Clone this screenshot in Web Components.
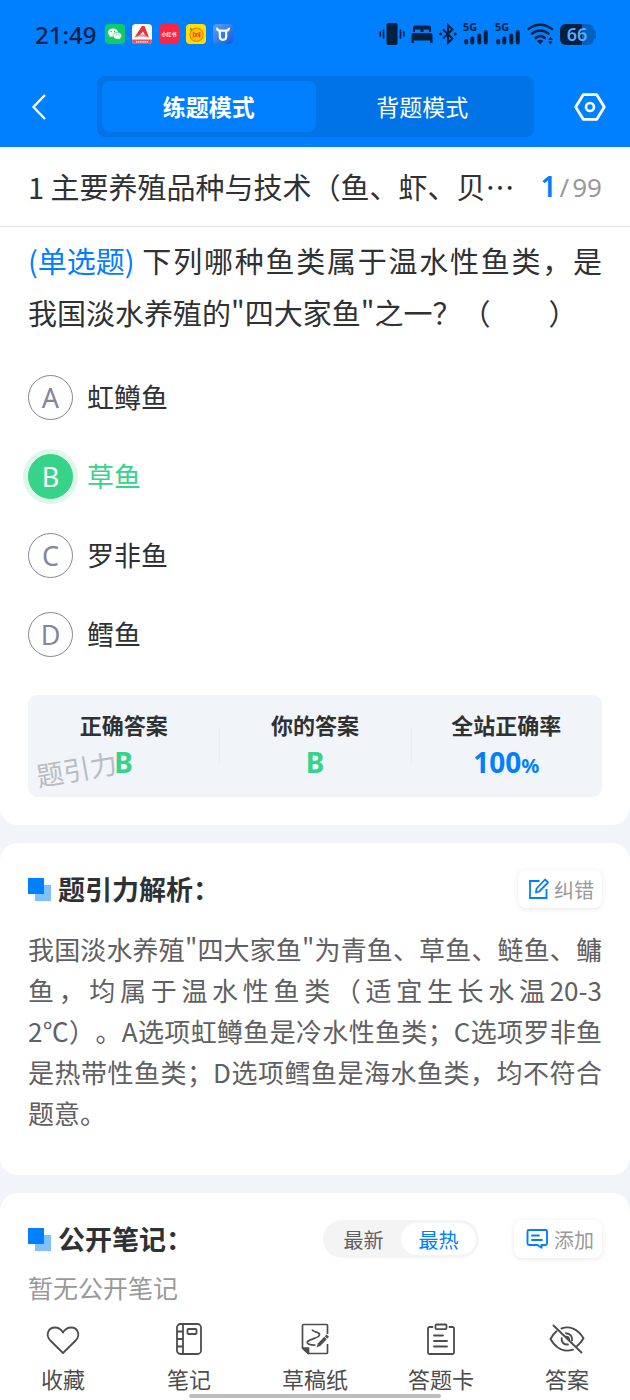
<!DOCTYPE html>
<html lang="zh-CN">
<head>
<meta charset="UTF-8">
<meta name="viewport" content="width=device-width, initial-scale=1">
<title>练题模式</title>
<style>
    :root {
        --blue: #0080ff;
        --green: #36d388;
        --ink: #303133;
        --text: #5f6062;
        --muted: #999;
        --page: #f1f5f9;
        --side: 28px;
    }
    body {
        margin: 0;
        min-height: 100vh;
        display: flex;
        flex-direction: column;
        background: var(--page);
        color: var(--ink);
        font-family: "Noto Sans CJK SC", "Noto Sans", sans-serif;
        text-spacing-trim: space-all;
    }
    main {
        flex: 1;
        display: flex;
        flex-direction: column;
        gap: 18px;
    }
    notes-card { flex: 1; }
</style>
</head>
<body>
    <top-header></top-header>
    <main>
        <question-card></question-card>
        <analysis-card>我国淡水养殖"四大家鱼"为青鱼、草鱼、鲢鱼、鳙鱼，均属于温水性鱼类（适宜生长水温20-32℃）。A选项虹鳟鱼是冷水性鱼类；C选项罗非鱼是热带性鱼类；D选项鳕鱼是海水鱼类，均不符合题意。</analysis-card>
        <notes-card>暂无公开笔记</notes-card>
    </main>
    <bottom-bar></bottom-bar>

<script>
    const ICONS = {
        wechat: `<svg width="20" height="20" viewBox="0 0 20 20"><rect width="20" height="20" rx="4" fill="#0fca68"/>
            <path d="M8 4.500c-2.900 0-5 1.800-5 4.100 0 1.300.7 2.400 1.800 3.200l-.4 1.500 1.700-.9c.7.2 1.200.3 1.900.3 2.800 0 5-1.900 5-4.200S10.800 4.500 8 4.500z" fill="#fff"/>
            <path d="M12.500 8.200c-2.500 0-4.400 1.600-4.400 3.600s1.900 3.500 4.400 3.500c.5 0 1-.1 1.500-.2l1.500.8-.4-1.300c1-.7 1.600-1.700 1.600-2.800 0-2-1.800-3.600-4.200-3.600z" fill="#fff" stroke="#0fca68" stroke-width=".7"/>
            <g fill="#0fca68"><circle cx="6.300" cy="7.400" r=".7"/><circle cx="9.500" cy="7.400" r=".7"/><circle cx="11.200" cy="10.900" r=".6"/><circle cx="14" cy="10.900" r=".6"/></g></svg>`,
        arrowApp: `<svg width="20" height="20" viewBox="0 0 20 20"><rect width="20" height="20" rx="4" fill="#fff"/>
            <path d="M0 15.500h20v.5a4 4 0 0 1-4 4H4a4 4 0 0 1-4-4z" fill="#e8555e"/>
            <path d="M2.500 13.500 10 2h2.500L17 13.500l-3.500-1.500-2.500-4.500-3.500 4z" fill="#e8333f"/><path d="M5 12.800l5-2.500 3 .7 4 2.500-6-1z" fill="#f28a8f"/>
            <path d="M4 17.800h12" stroke="#fff" stroke-width="1.200" stroke-dasharray="1.500 .6"/></svg>`,
        redApp: `<svg width="20" height="20" viewBox="0 0 20 20"><rect width="20" height="20" rx="4" fill="#ff2442"/>
            <text x="10" y="12" text-anchor="middle" font-size="5" font-weight="700" fill="#fff">小红书</text></svg>`,
        coinApp: `<svg width="20" height="20" viewBox="0 0 20 20"><rect width="20" height="20" rx="4" fill="#ffdf00"/>
            <circle cx="10.500" cy="10.800" r="6.600" fill="#ffc400" stroke="#f08300" stroke-width="1.200"/>
            <path d="M6.800 7.800 9.500 9h2.200l2.700-1.200v6L11.700 12.500H9.500l-2.700 1.300z" fill="#f0521d"/>
            <path d="M8.700 9.800v2.200M12.500 9.800l-1.300 1.100 1.300 1.100" stroke="#ffd800" fill="none"/>
            <path d="M3.500 3.500l3 1.500L5 7z" fill="#3e9b68"/></svg>`,
        bullApp: `<svg width="20" height="20" viewBox="0 0 20 20"><defs><linearGradient id="b" x1="0" y1="0" x2="1" y2="1"><stop offset="0" stop-color="#5ba4f8"/><stop offset="1" stop-color="#1457df"/></linearGradient></defs>
            <rect width="20" height="20" rx="4" fill="url(#b)"/>
            <path d="M4 3.800c0 2 .8 2.900 2.700 2.900h6.600c1.900 0 2.700-.9 2.700-2.900M6.800 6.700v5.800c0 4.400 6.400 4.400 6.400 0V6.700" fill="none" stroke="#fff" stroke-width="2.200"/></svg>`,
        vibrate: `<svg width="26" height="22" viewBox="0 0 26 22"><rect x="7.500" y="0" width="11" height="22" rx="1.800" fill="currentColor"/>
            <path d="M4.500 7v8M1.200 9v4M21.500 7v8M24.800 9v4" stroke="currentColor" stroke-width="1.700" stroke-linecap="round"/></svg>`,
        bed: `<svg width="22" height="22" viewBox="0 0 22 22"><path d="M2 9V5a2.500 2.500 0 0 1 2.500-2.500h13A2.500 2.500 0 0 1 20 5v4h-2V6.500h-5.500V9h-3V6.500H4V9z" fill="currentColor"/>
            <path d="M2.500 10h17a2 2 0 0 1 2 2v8h-2.300v-2.500H2.800V20H.5v-8a2 2 0 0 1 2-2z" fill="currentColor"/></svg>`,
        bluetooth: `<svg width="18" height="22" viewBox="0 0 18 22"><path d="M4 6.500l9.500 9L9 19.800V2.200l4.500 4.300-9.500 9" fill="none" stroke="currentColor" stroke-width="2"/>
            <circle cx="1.800" cy="11" r="1.500" fill="currentColor"/><circle cx="16.200" cy="11" r="1.500" fill="currentColor"/></svg>`,
        signal: `<svg width="26" height="22" viewBox="0 0 26 22"><text x="0" y="8" font-size="11" font-weight="700" fill="currentColor">5G</text>
            <path d="M3.300 18v1.500M9.300 15.500v4M16.300 12.500v7M22.800 9v10.500" stroke="currentColor" stroke-width="4" stroke-linecap="round"/></svg>`,
        wifi: `<svg width="27" height="22" viewBox="0 0 27 22"><g fill="none" stroke="currentColor" stroke-width="2.400" stroke-linecap="round"><path d="M1.500 6.200c7-6 16.500-6 23.500 0M5 10.700c5-4.300 11.500-4.300 16.500 0M8.700 15c3-2.500 6.200-2.500 9.200 0"/></g>
            <path d="M10 18c2-1.600 4.400-1.600 6.300 0L13.200 21.500zM21 17l2.500-3.300L26 17zM21 18.300l2.500 3.200 2.500-3.200z" fill="currentColor"/></svg>`,
        back: `<svg width="16" height="28" viewBox="0 0 16 28"><path d="M14 2 2.500 14 14 26" fill="none" stroke="currentColor" stroke-width="2.400"/></svg>`,
        settings: `<svg width="32" height="28" viewBox="0 0 32 28"><path d="M9.200 1.700h13.600L30.300 14l-7.500 12.300H9.200L1.700 14z" fill="none" stroke="currentColor" stroke-width="2.800" stroke-linejoin="round"/><circle cx="16" cy="14" r="4" fill="none" stroke="currentColor" stroke-width="2.600"/></svg>`,
        squares: `<svg width="23" height="23" viewBox="0 0 23 23"><rect x="7" y="7" width="16" height="16" fill="#80c0ff"/><rect width="16" height="16" fill="#0080ff"/></svg>`,
        edit: `<svg width="20" height="22" viewBox="0 0 20 22" fill="none" stroke="currentColor" stroke-width="1.800"><path d="M10.500 3H1v17h16.500v-9"/><path d="M7 14.500l.6-4L16 1.500l3 3-8.800 9z" stroke-linejoin="round"/></svg>`,
        comment: `<svg width="24" height="22" viewBox="0 0 24 22" fill="none" stroke="currentColor" stroke-width="1.900" stroke-linejoin="round" stroke-linecap="round"><path d="M4 2h16.500a1.500 1.500 0 0 1 1.500 1.500v12a1.500 1.500 0 0 1-1.500 1.500h-4v2.700L12.500 17H4a1.500 1.500 0 0 1-1.500-1.500v-12A1.500 1.500 0 0 1 4 2z"/><path d="M7 7.500h7M7 12h10"/></svg>`,
        heart: `<svg width="34" height="34" viewBox="0 0 34 34"><path d="M17 31 4.300 18.500C-1 13 2.500 5.500 8.700 5.500c3.800 0 6.600 1.800 8.300 5.100 1.700-3.300 4.500-5.100 8.300-5.100 6.200 0 9.700 7.500 4.400 13z" fill="none" stroke="currentColor" stroke-width="1.800" stroke-linejoin="round"/></svg>`,
        notebook: `<svg width="34" height="34" viewBox="0 0 34 34" fill="none" stroke="currentColor" stroke-width="1.800"><rect x="5" y="2" width="24" height="30" rx="3.500"/><path d="M11 2v30M5 9.500h6M5 17h6M5 24.500h6"/><rect x="15.500" y="7" width="9" height="5" rx="1"/></svg>`,
        draft: `<svg width="34" height="34" viewBox="0 0 34 34" fill="none" stroke="currentColor" stroke-width="1.700"><path d="M29.500 12V3.500a1 1 0 0 0-1-1h-23a1 1 0 0 0-1 1V26l6 5.500h18a1 1 0 0 0 1-1V22"/>
            <path d="M4.500 26h6v5.500z" fill="currentColor" stroke-linejoin="round"/><path d="M14 7.500c1.500 3.500 8 2 7.500 5.500-.5 3.200-8 3-12 6.500-1.500 2.500 4 4 8 3.500"/>
            <path d="M18.500 25.500l1.500-4.200L28.500 12.500l2.500 2.300-8.500 9z" fill="currentColor" stroke="none"/><path d="M26 14l3 2.800" stroke="#fff" stroke-width="1"/></svg>`,
        sheet: `<svg width="34" height="34" viewBox="0 0 34 34" fill="none" stroke="currentColor" stroke-width="1.800" stroke-linecap="round"><path d="M8.500 5H5.500a1.500 1.500 0 0 0-1.500 1.500v24A1.500 1.500 0 0 0 5.500 32h23a1.500 1.500 0 0 0 1.500-1.500v-24A1.500 1.500 0 0 0 28.500 5h-3"/>
            <rect x="11.500" y="2.500" width="11" height="4.600" rx="1"/><path d="M10 13.500h9M10 19h13M10 24.500h13"/></svg>`,
        hidden: `<svg width="36" height="34" viewBox="0 0 36 34" fill="none" stroke="currentColor" stroke-width="1.900" stroke-linecap="round"><path d="M12.500 6.500c7.500-2.800 16-.3 22 9.700-2 3.600-4.300 6.200-6.700 8M24 27.700C15.500 30.500 7.200 27 1.500 17c1.700-3.300 3.800-5.800 6-7.700M4.500 3.500l28 27"/>
            <path d="M17 11.300c4 .1 6.700 3 6 7M19 22.500c-4 .5-7-2.500-6.300-6.300M17.200 14.800c1.800-.2 3 1 3 2.800"/></svg>`
    };

    class UiIcon extends HTMLElement {
        connectedCallback() {
            this.attachShadow({ mode: 'open' });
            this.shadowRoot.innerHTML = `
                <style>
                    :host { display: inline-flex; flex: none; }
                    svg {
                        display: block;
                        overflow: visible;
                        font-family: "Noto Sans", "Noto Sans CJK SC", sans-serif;
                    }
                </style>
                ${ICONS[this.getAttribute('name')]}
            `;
        }
    }
    customElements.define('ui-icon', UiIcon);

    class StatusBar extends HTMLElement {
        connectedCallback() {
            this.attachShadow({ mode: 'open' });
            this.shadowRoot.innerHTML = `
                <style>
                    :host {
                        display: flex;
                        align-items: center;
                        justify-content: space-between;
                        height: 68px;
                        padding: 0 36px 0 35px;
                        color: #03203f;
                        font-family: "Noto Sans", sans-serif;
                    }
                    .group { display: flex; align-items: center; gap: 7px; }
                    .system { gap: 6px; }
                    time { margin-right: 2px; font-size: 24px; font-weight: 500; }
                    .battery {
                        position: relative;
                        width: 34px;
                        height: 21px;
                        border-radius: 6px;
                        background: linear-gradient(90deg, #03203f 66%, #0461be 66%);
                        color: #5aabff;
                        font-size: 18px;
                        font-weight: 600;
                        line-height: 21px;
                        text-align: center;
                    }
                    .battery::after {
                        content: "";
                        position: absolute;
                        right: -2px;
                        top: 6px;
                        width: 2px;
                        height: 9px;
                        border-radius: 0 2px 2px 0;
                        background: #0461be;
                    }
                </style>
                <div class="group">
                    <time>21:49</time>
                    <ui-icon name="wechat"></ui-icon>
                    <ui-icon name="arrowApp"></ui-icon>
                    <ui-icon name="redApp"></ui-icon>
                    <ui-icon name="coinApp"></ui-icon>
                    <ui-icon name="bullApp"></ui-icon>
                </div>
                <div class="group system">
                    <ui-icon name="vibrate"></ui-icon>
                    <ui-icon name="bed"></ui-icon>
                    <ui-icon name="bluetooth"></ui-icon>
                    <ui-icon name="signal"></ui-icon>
                    <ui-icon name="signal"></ui-icon>
                    <ui-icon name="wifi"></ui-icon>
                    <div class="battery">66</div>
                </div>
            `;
        }
    }
    customElements.define('status-bar', StatusBar);

    class TopHeader extends HTMLElement {
        connectedCallback() {
            this.attachShadow({ mode: 'open' });
            this.shadowRoot.innerHTML = `
                <style>
                    :host { display: block; background: var(--blue); color: #fff; }
                    nav {
                        display: grid;
                        grid-template-columns: 72px 1fr 72px;
                        align-items: center;
                        padding: 8px 24px 10px 25px;
                    }
                    button {
                        border: 0;
                        padding: 0;
                        background: none;
                        color: inherit;
                        font: inherit;
                        cursor: pointer;
                    }
                    .back, .settings { display: flex; }
                    .back { justify-self: start; padding: 0 6px; }
                    .settings { justify-self: end; }
                    .modes {
                        display: grid;
                        grid-template-columns: 1fr 1fr;
                        padding: 5px;
                        border-radius: 8px;
                        background: #0073e6;
                    }
                    .modes button {
                        height: 51px;
                        padding-bottom: 2px;
                        border-radius: 8px;
                        font-size: 23px;
                    }
                    .modes button[aria-pressed="true"] { background: var(--blue); font-weight: 700; }
                </style>
                <status-bar></status-bar>
                <nav>
                    <button class="back" aria-label="返回"><ui-icon name="back"></ui-icon></button>
                    <div class="modes">
                        <button aria-pressed="true">练题模式</button>
                        <button aria-pressed="false">背题模式</button>
                    </div>
                    <button class="settings" aria-label="设置"><ui-icon name="settings"></ui-icon></button>
                </nav>
            `;
        }
    }
    customElements.define('top-header', TopHeader);

    class OptionList extends HTMLElement {
        connectedCallback() {
            const options = [['A', '虹鳟鱼'], ['B', '草鱼'], ['C', '罗非鱼'], ['D', '鳕鱼']];
            this.attachShadow({ mode: 'open' });
            this.shadowRoot.innerHTML = `
                <style>
                    :host { display: flex; flex-direction: column; gap: 34px; }
                    label {
                        display: grid;
                        grid-template-columns: 45px 1fr;
                        column-gap: 14px;
                        align-items: center;
                        font-size: 27px;
                        line-height: 43px;
                        cursor: pointer;
                    }
                    input, .letter { grid-area: 1 / 1; }
                    .name { padding-bottom: 2px; }
                    input {
                        appearance: none;
                        box-sizing: border-box;
                        width: 45px;
                        height: 45px;
                        margin: 0;
                        border: 1px solid #85859b;
                        border-radius: 50%;
                    }
                    .letter {
                        color: #85859b;
                        font-family: "Noto Sans", sans-serif;
                        text-align: center;
                    }
                    input:checked {
                        border-color: var(--green);
                        background: var(--green);
                        box-shadow: 0 0 0 5px #def7ea;
                    }
                    input:checked + .letter { color: #fff; z-index: 1; }
                    input:checked ~ .name { color: var(--green); }
                </style>
                ${options.map(([letter, name]) => `
                <label>
                    <input type="radio" name="answer" value="${letter}"${letter === 'B' ? ' checked' : ''}>
                    <span class="letter">${letter}</span>
                    <span class="name">${name}</span>
                </label>`).join('')}
            `;
        }
    }
    customElements.define('option-list', OptionList);

    class AnswerSummary extends HTMLElement {
        connectedCallback() {
            this.attachShadow({ mode: 'open' });
            this.shadowRoot.innerHTML = `
                <style>
                    :host {
                        position: relative;
                        display: block;
                        border-radius: 9px;
                        background: var(--page);
                    }
                    dl {
                        display: grid;
                        grid-template-columns: repeat(3, 1fr);
                        margin: 0;
                        padding: 14px 0 12px;
                        text-align: center;
                    }
                    .item { position: relative; font-weight: 700; }
                    .item + .item::before {
                        content: "";
                        position: absolute;
                        left: 0;
                        top: 19px;
                        height: 36px;
                        border-left: 1px solid #e8edf2;
                    }
                    dt { font-size: 22px; line-height: 30px; }
                    dd {
                        margin: 0;
                        color: var(--green);
                        font-family: "Noto Sans", sans-serif;
                        font-size: 28px;
                        line-height: 46px;
                    }
                    .rate { color: var(--blue); }
                    small { font-size: 20px; line-height: 20px; }
                    .watermark {
                        position: absolute;
                        left: 8px;
                        bottom: 8px;
                        color: #b9bcc0;
                        font-size: 27px;
                        line-height: 40px;
                        transform: rotate(-10deg);
                    }
                </style>
                <span class="watermark">题引力</span>
                <dl>
                    <div class="item"><dt>正确答案</dt><dd>B</dd></div>
                    <div class="item"><dt>你的答案</dt><dd>B</dd></div>
                    <div class="item"><dt>全站正确率</dt><dd class="rate">100<small>%</small></dd></div>
                </dl>
            `;
        }
    }
    customElements.define('answer-summary', AnswerSummary);

    class QuestionCard extends HTMLElement {
        connectedCallback() {
            this.attachShadow({ mode: 'open' });
            this.shadowRoot.innerHTML = `
                <style>
                    :host {
                        display: block;
                        background: #fff;
                        border-radius: 0 0 18px 18px;
                    }
                    header {
                        display: flex;
                        align-items: center;
                        justify-content: space-between;
                        box-sizing: border-box;
                        height: 80px;
                        padding: 0 var(--side) 2px;
                        border-bottom: 1px solid #ddd;
                    }
                    h1 {
                        margin: 0;
                        font-size: 29px;
                        font-weight: 400;
                        white-space: nowrap;
                    }
                    .count {
                        display: flex;
                        align-items: baseline;
                        gap: 3px;
                        color: var(--muted);
                        font-family: "Noto Sans", sans-serif;
                        font-size: 26px;
                    }
                    .count b { color: var(--blue); font-size: 28px; font-weight: 600; }
                    .body { padding: 7px var(--side) 28px; }
                    p {
                        margin: 0 0 37px;
                        font-size: 29px;
                        line-height: 52px;
                        text-align: justify;
                        word-break: break-all;
                    }
                    p span {
                        display: inline-block;
                        margin-right: 6px;
                        color: var(--blue);
                        text-align: start;
                    }
                    answer-summary { margin-top: 38px; }
                </style>
                <header>
                    <h1>1 主要养殖品种与技术（鱼、虾、贝…</h1>
                    <div class="count"><b>1</b><span>/</span><span>99</span></div>
                </header>
                <div class="body">
                    <p><span>(单选题)</span>下列哪种鱼类属于温水性鱼类，是我国淡水养殖的"四大家鱼"之一？（　　）</p>
                    <option-list></option-list>
                    <answer-summary></answer-summary>
                </div>
            `;
        }
    }
    customElements.define('question-card', QuestionCard);

    class SectionHead extends HTMLElement {
        connectedCallback() {
            this.attachShadow({ mode: 'open' });
            this.shadowRoot.innerHTML = `
                <style>
                    :host { display: flex; align-items: center; gap: 7px; height: 38px; }
                    h2 { flex: 1; margin: 0; font-size: 27px; line-height: 38px; }
                </style>
                <ui-icon name="squares"></ui-icon>
                <h2><slot></slot></h2>
                <slot name="tools"></slot>
            `;
        }
    }
    customElements.define('section-head', SectionHead);

    class ToolButton extends HTMLElement {
        connectedCallback() {
            this.attachShadow({ mode: 'open' });
            this.shadowRoot.innerHTML = `
                <style>
                    :host { display: block; }
                    button {
                        display: flex;
                        align-items: center;
                        gap: 5px;
                        height: 38px;
                        padding: 0 8px 0 11px;
                        border: 0;
                        border-radius: 8px;
                        background: #fff;
                        box-shadow: 0 1px 5px rgba(0, 0, 0, 0.1);
                        color: var(--muted);
                        font: inherit;
                        font-size: 20px;
                        cursor: pointer;
                    }
                    ui-icon { color: var(--blue); }
                </style>
                <button><ui-icon name="${this.getAttribute('icon')}"></ui-icon><slot></slot></button>
            `;
        }
    }
    customElements.define('tool-button', ToolButton);

    class AnalysisCard extends HTMLElement {
        connectedCallback() {
            this.attachShadow({ mode: 'open' });
            this.shadowRoot.innerHTML = `
                <style>
                    :host {
                        display: block;
                        padding: 27px var(--side) 42px;
                        border-radius: 18px;
                        background: #fff;
                    }
                    p {
                        margin: 20px 0 0;
                        color: var(--text);
                        font-size: 26px;
                        line-height: 41px;
                        text-align: justify;
                        word-break: break-all;
                    }
                </style>
                <section-head>题引力解析：<tool-button slot="tools" icon="edit">纠错</tool-button></section-head>
                <p><slot></slot></p>
            `;
        }
    }
    customElements.define('analysis-card', AnalysisCard);

    class NotesCard extends HTMLElement {
        connectedCallback() {
            this.attachShadow({ mode: 'open' });
            this.shadowRoot.innerHTML = `
                <style>
                    :host {
                        display: block;
                        padding: 27px var(--side) 0;
                        border-radius: 18px 18px 0 0;
                        background: #fff;
                    }
                    .sort {
                        display: flex;
                        margin-right: 28px;
                        padding: 3px;
                        border-radius: 19px;
                        background: #f4f4f4;
                    }
                    .sort button {
                        width: 75px;
                        height: 32px;
                        padding: 0;
                        border: 0;
                        border-radius: 16px;
                        background: none;
                        color: var(--text);
                        font: inherit;
                        font-size: 20px;
                        cursor: pointer;
                    }
                    .sort button[aria-pressed="true"] { background: #fff; color: var(--blue); }
                    p {
                        margin: 10px 0 0;
                        color: var(--muted);
                        font-size: 25px;
                        line-height: 38px;
                    }
                </style>
                <section-head>公开笔记：
                    <div class="sort" slot="tools">
                        <button aria-pressed="false">最新</button>
                        <button aria-pressed="true">最热</button>
                    </div>
                    <tool-button slot="tools" icon="comment">添加</tool-button>
                </section-head>
                <p><slot></slot></p>
            `;
        }
    }
    customElements.define('notes-card', NotesCard);

    class BottomBar extends HTMLElement {
        connectedCallback() {
            const items = [['heart', '收藏'], ['notebook', '笔记'], ['draft', '草稿纸'], ['sheet', '答题卡'], ['hidden', '答案']];
            this.attachShadow({ mode: 'open' });
            this.shadowRoot.innerHTML = `
                <style>
                    :host {
                        position: sticky;
                        bottom: 0;
                        display: block;
                        background: #fff;
                    }
                    nav {
                        display: grid;
                        grid-template-columns: repeat(5, 1fr);
                        padding: 12px 0 6px;
                    }
                    button {
                        display: flex;
                        flex-direction: column;
                        align-items: center;
                        gap: 6px;
                        padding: 0;
                        border: 0;
                        background: none;
                        color: #4d4d4d;
                        font: inherit;
                        font-size: 22px;
                        line-height: 32px;
                        cursor: pointer;
                    }
                    .home {
                        position: absolute;
                        left: 30%;
                        right: 30%;
                        bottom: 2px;
                        height: 4px;
                        border-radius: 2px;
                        background: #bdbdbd;
                    }
                </style>
                <nav>
                    ${items.map(([icon, text]) => `<button><ui-icon name="${icon}"></ui-icon>${text}</button>`).join('')}
                </nav>
                <div class="home"></div>
            `;
        }
    }
    customElements.define('bottom-bar', BottomBar);
</script>
</body>
</html>
